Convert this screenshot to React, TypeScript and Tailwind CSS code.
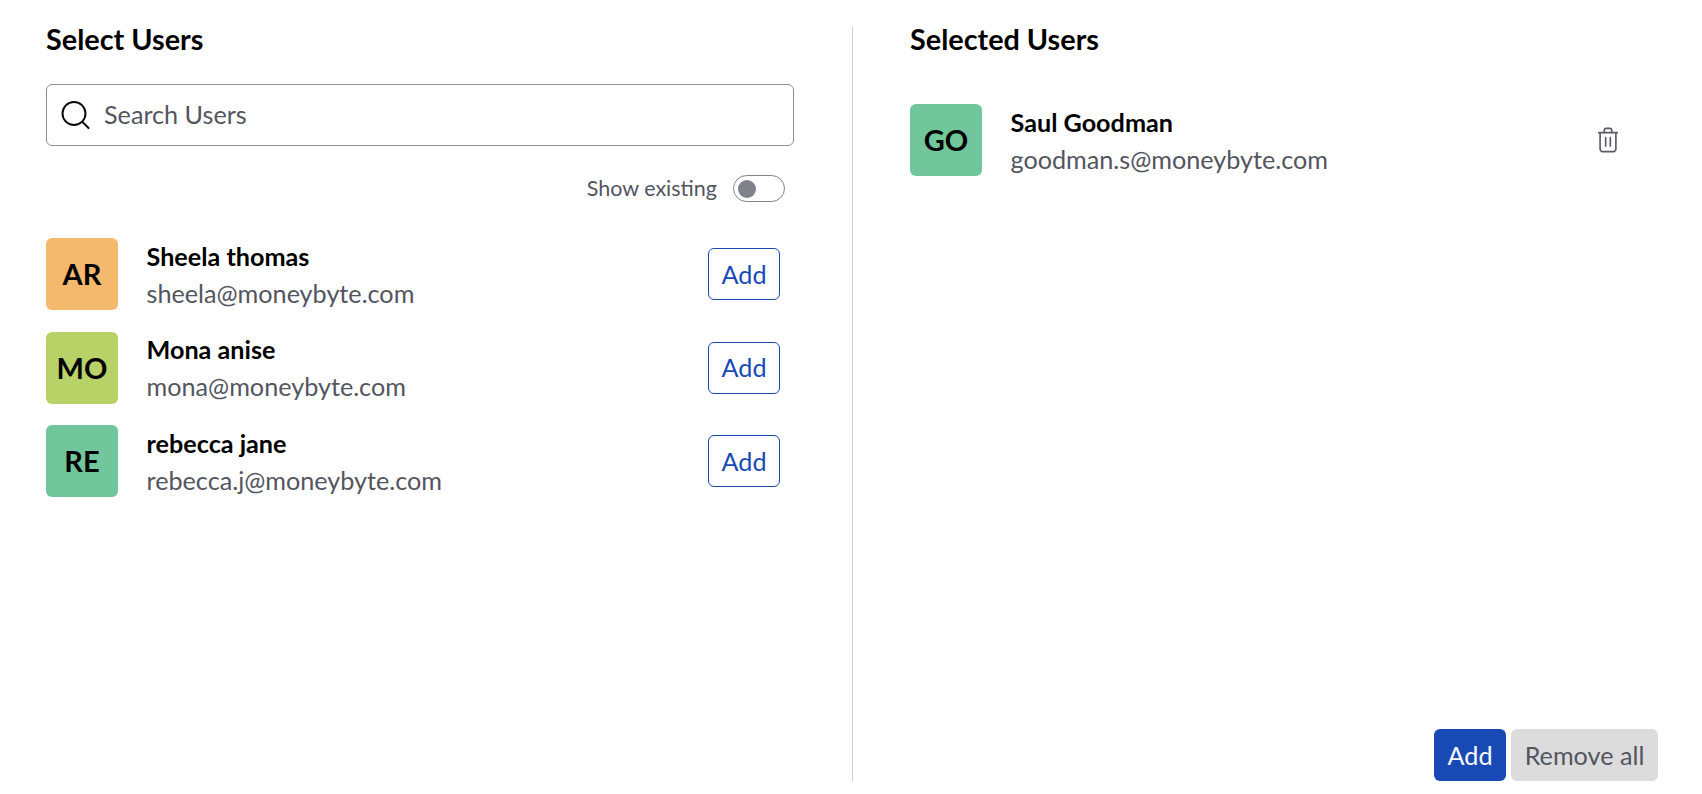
import React from "react";

const font = "font-['Lato','Liberation_Sans',sans-serif]";

function Avatar({ text, color }: { text: string; color: string }) {
  return (
    <div className={`w-[72px] h-[72px] shrink-0 rounded-[6px] flex items-center justify-center text-[29px] font-bold text-black ${color}`}>
      {text}
    </div>
  );
}

function Info({ name, email }: { name: string; email: string }) {
  return (
    <div className="ml-[28.5px] pt-[1.5px] flex flex-col">
      <div className="text-[25.2px] leading-[37px] font-bold text-black">{name}</div>
      <div className="text-[25.2px] leading-[37.5px] text-[#53555f]">{email}</div>
    </div>
  );
}

const users = [
  { text: "AR", color: "bg-[#f5b96e]", name: "Sheela thomas", email: "sheela@moneybyte.com" },
  { text: "MO", color: "bg-[#b9d267]", name: "Mona anise", email: "mona@moneybyte.com" },
  { text: "RE", color: "bg-[#72c69b]", name: "rebecca jane", email: "rebecca.j@moneybyte.com" },
];

export default function App() {
  return (
    <div className={`${font} w-[1702px] h-[794px] bg-white flex pt-[27px] pl-[46px] overflow-hidden`}>
      <div className="w-[807px] h-[754px] pr-[59px] border-r border-[#cfcfcf] shrink-0">
        <h2 className="text-[28.8px] leading-[24px] font-bold text-black">Select Users</h2>
        <div className="mt-[33px] h-[62px] w-[748px] rounded-[6px] border border-[#8f9096] flex items-center pl-[13px]">
          <svg width="32" height="32" viewBox="0 0 32 32" fill="none" stroke="#0b0b0b" strokeWidth="2" strokeLinecap="round" className="shrink-0">
            <circle cx="14" cy="14.5" r="11.5" />
            <path d="M22.5 23l6 6" />
          </svg>
          <span className="ml-[12px] text-[25.2px] text-[#53555f]">Search Users</span>
        </div>
        <div className="mt-[29px] h-[27px] w-[739px] flex items-center justify-end">
          <span className="text-[21.5px] text-[#53555f]">Show existing</span>
          <div className="ml-[16px] w-[52px] h-[27px] rounded-full border border-[#7f818b] flex items-center pl-[4px]">
            <div className="w-[18px] h-[18px] rounded-full bg-[#7f818b]" />
          </div>
        </div>
        <div className="mt-[34px] flex flex-col gap-[17.6px] w-[734px]">
          {users.map((u) => (
            <div key={u.text} className="flex items-center">
              <Avatar text={u.text} color={u.color} />
              <Info name={u.name} email={u.email} />
              <button className="ml-auto w-[72px] h-[52px] pt-[1px] rounded-[6px] border border-[#1849b5] text-[25.2px] text-[#1849b5] bg-white">
                Add
              </button>
            </div>
          ))}
        </div>
      </div>
      <div className="pl-[57px] w-[805px] h-[754px] flex flex-col">
        <h2 className="text-[28.8px] leading-[24px] font-bold text-black">Selected Users</h2>
        <div className="mt-[51px] flex items-center w-[710px]">
          <Avatar text="GO" color="bg-[#72c69b]" />
          <Info name="Saul Goodman" email="goodman.s@moneybyte.com" />
          <svg width="24" height="26" viewBox="0 0 24 28" fill="none" stroke="#5b5d66" strokeWidth="1.8" strokeLinecap="round" strokeLinejoin="round" className="ml-auto">
            <path d="M2 6h20" />
            <path d="M8 6V3.5A2 2 0 0 1 10 1.5h4a2 2 0 0 1 2 2V6" />
            <path d="M3.5 6v17.5a3 3 0 0 0 3 3h11a3 3 0 0 0 3-3V6" />
            <path d="M9.5 11.5v9" />
            <path d="M14.5 11.5v9" />
          </svg>
        </div>
        <div className="mt-auto flex justify-end gap-[5px] w-[748px]">
          <button className="w-[72px] h-[52px] pt-[1px] rounded-[6px] bg-[#1849b5] text-[25.2px] text-white">Add</button>
          <button className="w-[147px] h-[52px] pt-[1px] rounded-[6px] bg-[#dcdcdc] text-[25.2px] text-[#53555f]">Remove all</button>
        </div>
      </div>
    </div>
  );
}
